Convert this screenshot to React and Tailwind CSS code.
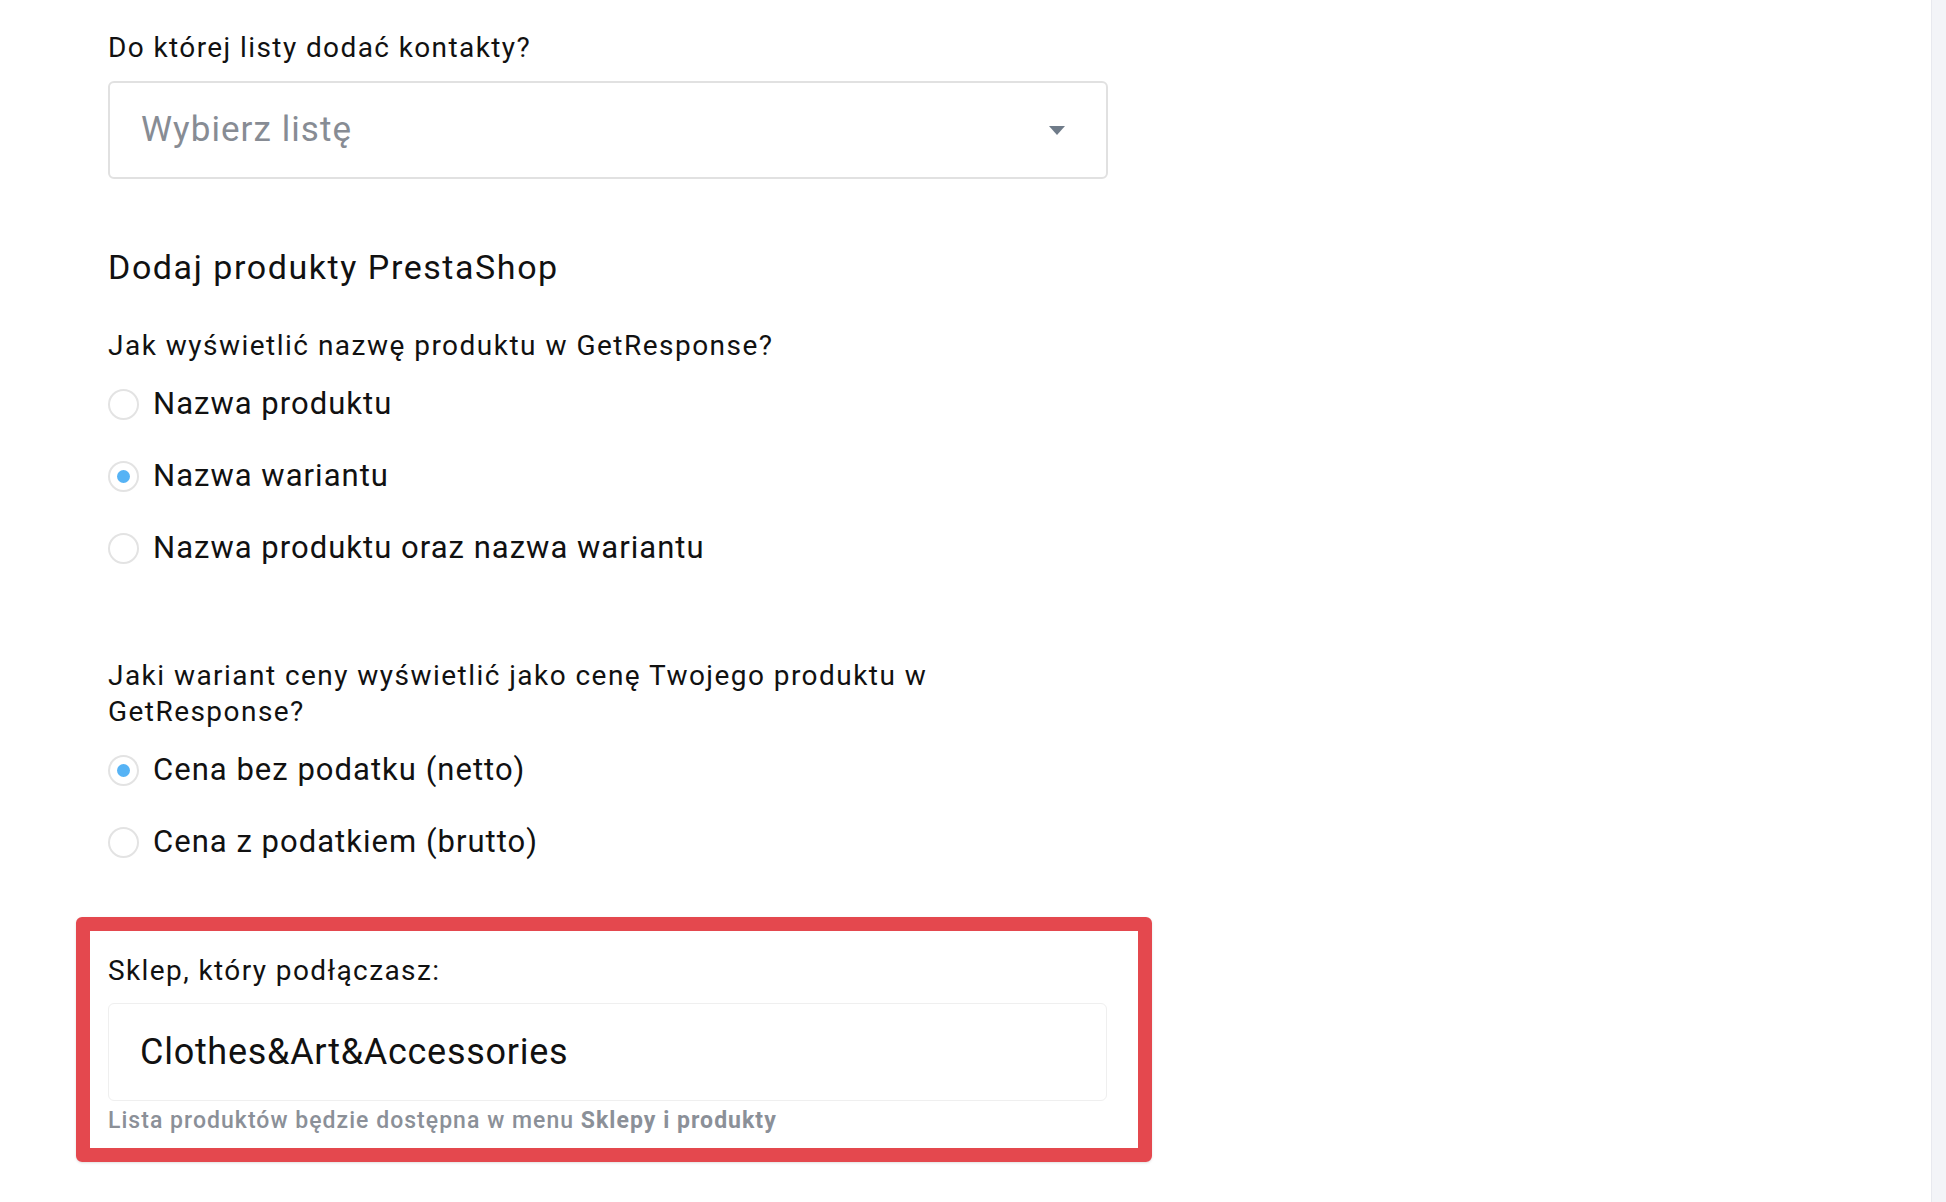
import React from 'react';

function Radio({ label, checked }) {
  return (
    <label className="flex h-[72px] items-center gap-[14px]">
      <span className="flex h-[31px] w-[31px] shrink-0 items-center justify-center rounded-full border-2 border-[#e3e3e3] bg-white">
        {checked && <span className="h-[13px] w-[13px] rounded-full bg-[#56b3f5]" />}
      </span>
      <span className="text-[31px] leading-[36px] tracking-[0.033em] text-[#111]">{label}</span>
    </label>
  );
}

export default function App() {
  return (
    <div className="flex min-h-screen bg-white" style={{ fontFamily: 'Roboto, "Liberation Sans", sans-serif' }}>
      <main className="flex-1 pl-[108px] pt-[30px]">
        <div className="w-[1000px]">
          <p className="text-[28px] leading-[36px] tracking-[0.05em] text-[#111]">Do której listy dodać kontakty?</p>
          <div className="mt-[15px] flex h-[98px] items-center justify-between rounded-md border-2 border-[#e1e1e1] pl-[31px] pr-[41px]">
            <span className="text-[35px] tracking-[0.03em] text-[#878c94]">Wybierz listę</span>
            <svg width="16" height="9" viewBox="0 0 16 9">
              <path d="M0 0h16L8 9z" fill="#6f7b89" />
            </svg>
          </div>

          <h2 className="mt-[66px] text-[34px] leading-[44px] tracking-[0.046em] text-[#111]">Dodaj produkty PrestaShop</h2>

          <p className="mt-[39px] text-[28px] leading-[36px] tracking-[0.053em] text-[#111]">Jak wyświetlić nazwę produktu w GetResponse?</p>
          <div className="mt-[4px] flex flex-col">
            <Radio label="Nazwa produktu" />
            <Radio label="Nazwa wariantu" checked />
            <Radio label="Nazwa produktu oraz nazwa wariantu" />
          </div>

          <p className="mt-[74px] text-[28px] leading-[36px] tracking-[0.052em] text-[#111]">Jaki wariant ceny wyświetlić jako cenę Twojego produktu w GetResponse?</p>
          <div className="mt-[4px] flex flex-col">
            <Radio label="Cena bez podatku (netto)" checked />
            <Radio label="Cena z podatkiem (brutto)" />
          </div>

          <div className="-ml-[32px] mt-[39px] w-[1076px] rounded-md border-[14px] border-[#e4484e] pb-[12px] pl-[18px] pr-[31px] pt-[22px] shadow-sm">
            <p className="text-[28px] leading-[36px] tracking-[0.05em] text-[#111]">Sklep, który podłączasz:</p>
            <div className="mt-[14px] flex h-[98px] items-center rounded-md border border-[#efefef] pl-[31px]">
              <span className="text-[36px] tracking-[0.02em] text-[#111]">Clothes&amp;Art&amp;Accessories</span>
            </div>
            <p className="mt-[5px] text-[23px] font-medium leading-[30px] tracking-[0.045em] text-[#8b9098]">
              Lista produktów będzie dostępna w menu <span className="font-bold">Sklepy i produkty</span>
            </p>
          </div>
        </div>
      </main>
      <aside className="w-[15px] border-l border-[#e8e9ef] bg-[#f3f4f8]" />
    </div>
  );
}
